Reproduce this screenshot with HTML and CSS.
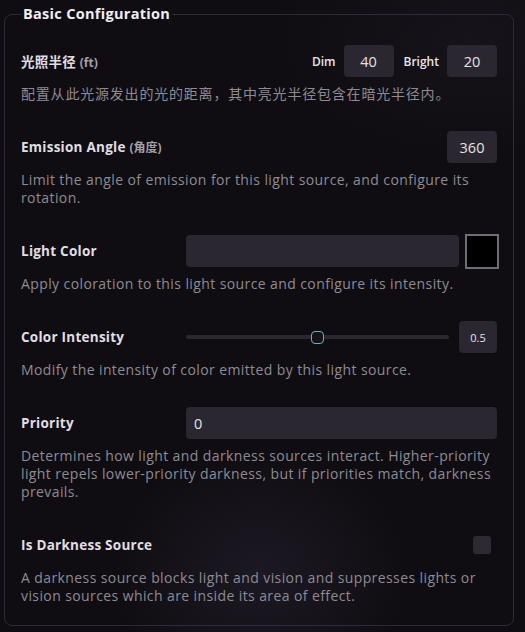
FILE: index.html
```html
<!DOCTYPE html>
<html lang="en">
<head>
<meta charset="utf-8">
<title>Basic Configuration</title>
<link rel="stylesheet" href="styles.css">
</head>
<body>
<div class="page">
  <fieldset class="config">
    <legend class="config-title">Basic Configuration</legend>

    <div class="group">
      <div class="row">
        <label class="label">光照半径 <span class="units">(ft)</span></label>
        <div class="fields fields-end">
          <span class="sub-label">Dim</span>
          <div class="input input-small input-center">40</div>
          <span class="sub-label sub-gap">Bright</span>
          <div class="input input-small input-center">20</div>
        </div>
      </div>
      <p class="hint hint-cjk">配置从此光源发出的光的距离，其中亮光半径包含在暗光半径内。</p>
    </div>

    <div class="group">
      <div class="row">
        <label class="label">Emission Angle <span class="units">(角度)</span></label>
        <div class="fields fields-end">
          <div class="input input-small input-center">360</div>
        </div>
      </div>
      <p class="hint">Limit the angle of emission for this light source, and configure its rotation.</p>
    </div>

    <div class="group">
      <div class="row">
        <label class="label">Light Color</label>
        <div class="fields">
          <div class="input input-grow"></div>
          <div class="swatch"></div>
        </div>
      </div>
      <p class="hint">Apply coloration to this light source and configure its intensity.</p>
    </div>

    <div class="group">
      <div class="row">
        <label class="label">Color Intensity</label>
        <div class="fields">
          <div class="slider">
            <div class="track"></div>
            <div class="thumb" style="left: 50%"></div>
          </div>
          <div class="input input-value input-center">0.5</div>
        </div>
      </div>
      <p class="hint">Modify the intensity of color emitted by this light source.</p>
    </div>

    <div class="group">
      <div class="row">
        <label class="label">Priority</label>
        <div class="fields">
          <div class="input input-grow input-left">0</div>
        </div>
      </div>
      <p class="hint">Determines how light and darkness sources interact. Higher-priority light repels lower-priority darkness, but if priorities match, darkness prevails.</p>
    </div>

    <div class="group group-last">
      <div class="row">
        <label class="label">Is Darkness Source</label>
        <div class="fields fields-end">
          <div class="checkbox"></div>
        </div>
      </div>
      <p class="hint">A darkness source blocks light and vision and suppresses lights or vision sources which are inside its area of effect.</p>
    </div>
  </fieldset>
</div>
</body>
</html>
```

FILE: styles.css
```css
* { box-sizing: border-box; }

html, body {
  margin: 0;
  height: 100%;
}

body {
  background:
    radial-gradient(ellipse 150px 130px at 260px 575px, rgba(40, 34, 52, 0.55), rgba(0, 0, 0, 0) 100%),
    radial-gradient(ellipse 200px 120px at 470px 40px, rgba(30, 26, 38, 0.45), rgba(0, 0, 0, 0) 100%),
    #0f0d11;
  font-family: "Open Sans", "Noto Sans CJK SC", sans-serif;
  color: #e4e2e8;
}

.page {
  padding-top: 4px;
}

.config {
  margin: 0 11px 0 4px;
  border: 1px solid #2e2b3c;
  border-radius: 8px;
  padding: 21px 16px 20px 16px;
  min-width: 0;
}

.config-title {
  padding: 0 2px;
  font-size: 14.5px;
  line-height: 20px;
  font-weight: 700;
  letter-spacing: 0.3px;
  color: #f0eef4;
}

.group {
  margin-bottom: 28px;
}

.group-last {
  margin-bottom: 0;
}

.row {
  display: flex;
  align-items: center;
  height: 32px;
  gap: 6px;
}

.label {
  flex: 0 0 159px;
  font-size: 13.5px;
  font-weight: 700;
  letter-spacing: 0.25px;
  color: #e0dee4;
  white-space: nowrap;
}

.units {
  font-size: 12px;
  letter-spacing: 0;
  color: #a3a0aa;
}

.fields {
  flex: 1;
  display: flex;
  align-items: center;
  height: 32px;
}

.fields-end {
  justify-content: flex-end;
}

.sub-label {
  font-size: 12px;
  font-weight: 600;
  color: #e8e6ec;
  margin-right: 8px;
}

.sub-gap {
  margin-left: 10px;
}

.input {
  height: 32px;
  background: #2b2730;
  border-radius: 4px;
  font-size: 14.5px;
  color: #e4e2e8;
  display: flex;
  align-items: center;
}

.input-center {
  justify-content: center;
}

.input-left {
  padding-left: 8px;
}

.input-small {
  width: 50px;
}

.input-grow {
  flex: 1;
}

.input-value {
  width: 38px;
  font-size: 11px;
  margin-left: 10px;
}

.swatch {
  width: 34px;
  height: 35px;
  margin-left: 6px;
  margin-right: -2px;
  background: #000;
  border: 2px solid #6f6d72;
}

.slider {
  position: relative;
  flex: 1;
  height: 14px;
}

.track {
  position: absolute;
  left: 0;
  right: 0;
  top: 5px;
  height: 4px;
  background: #2c2830;
  border-radius: 2px;
}

.thumb {
  position: absolute;
  top: 1px;
  width: 13px;
  height: 13px;
  margin-left: -7px;
  background: #15131a;
  border: 1.5px solid #5ab3c4;
  border-radius: 4px;
}

.checkbox {
  width: 18px;
  height: 18px;
  margin-right: 6px;
  background: #2e2a33;
  border-radius: 3px;
}

.hint {
  margin: 8px 0 0 0;
  font-size: 14px;
  line-height: 18px;
  letter-spacing: 0.4px;
  color: #8e8b95;
}

.hint-cjk {
  letter-spacing: 0.8px;
}
```
